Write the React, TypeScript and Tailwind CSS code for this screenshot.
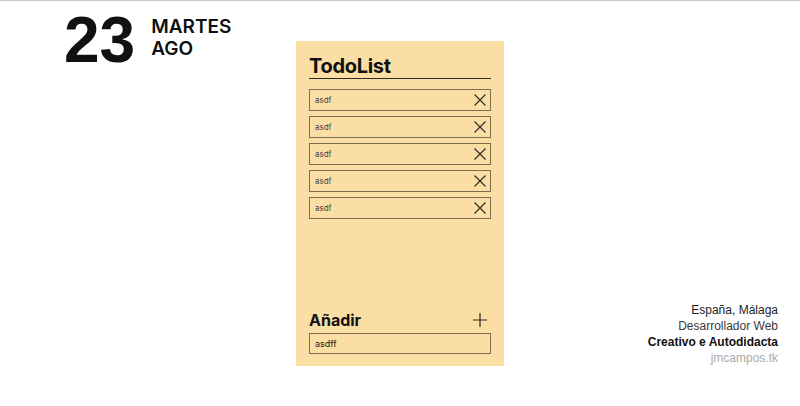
const todos = ["asdf", "asdf", "asdf", "asdf", "asdf"];

function CloseIcon() {
  return (
    <svg width="12" height="12" viewBox="0 0 12 12" className="shrink-0">
      <path d="M0.5 0.5 L11.5 11.5 M11.5 0.5 L0.5 11.5" stroke="#2b2b2b" strokeWidth="1.1" fill="none" />
    </svg>
  );
}

function PlusIcon() {
  return (
    <svg width="14" height="14" viewBox="0 0 14 14" className="shrink-0">
      <path d="M7 0 V14 M0 7 H14" stroke="#2b2b2b" strokeWidth="1.2" fill="none" />
    </svg>
  );
}

export default function App() {
  return (
    <div className="w-full h-[406px] bg-white border-t border-[#c9c9c9] grid grid-cols-[1fr_208px_1fr] font-['Inter',sans-serif] text-[#111]">
      {/* fecha */}
      <div className="flex items-start gap-[16px] pl-[64px] pt-[7px]">
        <span className="text-[64px] leading-none font-bold font-['Liberation_Sans',sans-serif]">23</span>
        <div className="pt-[8px] flex flex-col text-[19px] leading-[22px] font-semibold">
          <span>MARTES</span>
          <span>AGO</span>
        </div>
      </div>

      {/* todo list */}
      <div className="my-[40px] bg-[#fadea4] px-[13px] pt-[14px] pb-[12px] flex flex-col">
        <h1 className="text-[20px] leading-[23px] font-bold tracking-[-0.3px] border-b border-[#2a2a2a]">TodoList</h1>
        <ul className="mt-[10px] flex flex-col gap-[5px]">
          {todos.map((t, i) => (
            <li
              key={i}
              className="h-[22px] border border-[#7c6c4f] flex items-center justify-between pl-[5px] pr-[4px]"
            >
              <span className="text-[8px] text-[#444]">{t}</span>
              <CloseIcon />
            </li>
          ))}
        </ul>

        <div className="mt-auto">
          <div className="flex items-end justify-between pr-[4px]">
            <h2 className="text-[16px] leading-[20px] font-bold">Añadir</h2>
            <div className="pb-[3px]">
              <PlusIcon />
            </div>
          </div>
          <div className="mt-[3px] h-[21px] border border-[#7c6c4f] flex items-center px-[5px]">
            <span className="text-[9px] text-[#222]">asdff</span>
          </div>
        </div>
      </div>

      {/* info */}
      <div className="self-end mb-[40px] pr-[22px] flex flex-col items-end text-[12px] leading-[16px] font-['Liberation_Sans',sans-serif]">
        <span className="text-[#1d1d1d]">España, Málaga</span>
        <span className="text-[#3a3a3a]">Desarrollador Web</span>
        <span className="font-bold text-[#111]">Creativo e Autodidacta</span>
        <span className="text-[#aaaaaa]">jmcampos.tk</span>
      </div>
    </div>
  );
}
